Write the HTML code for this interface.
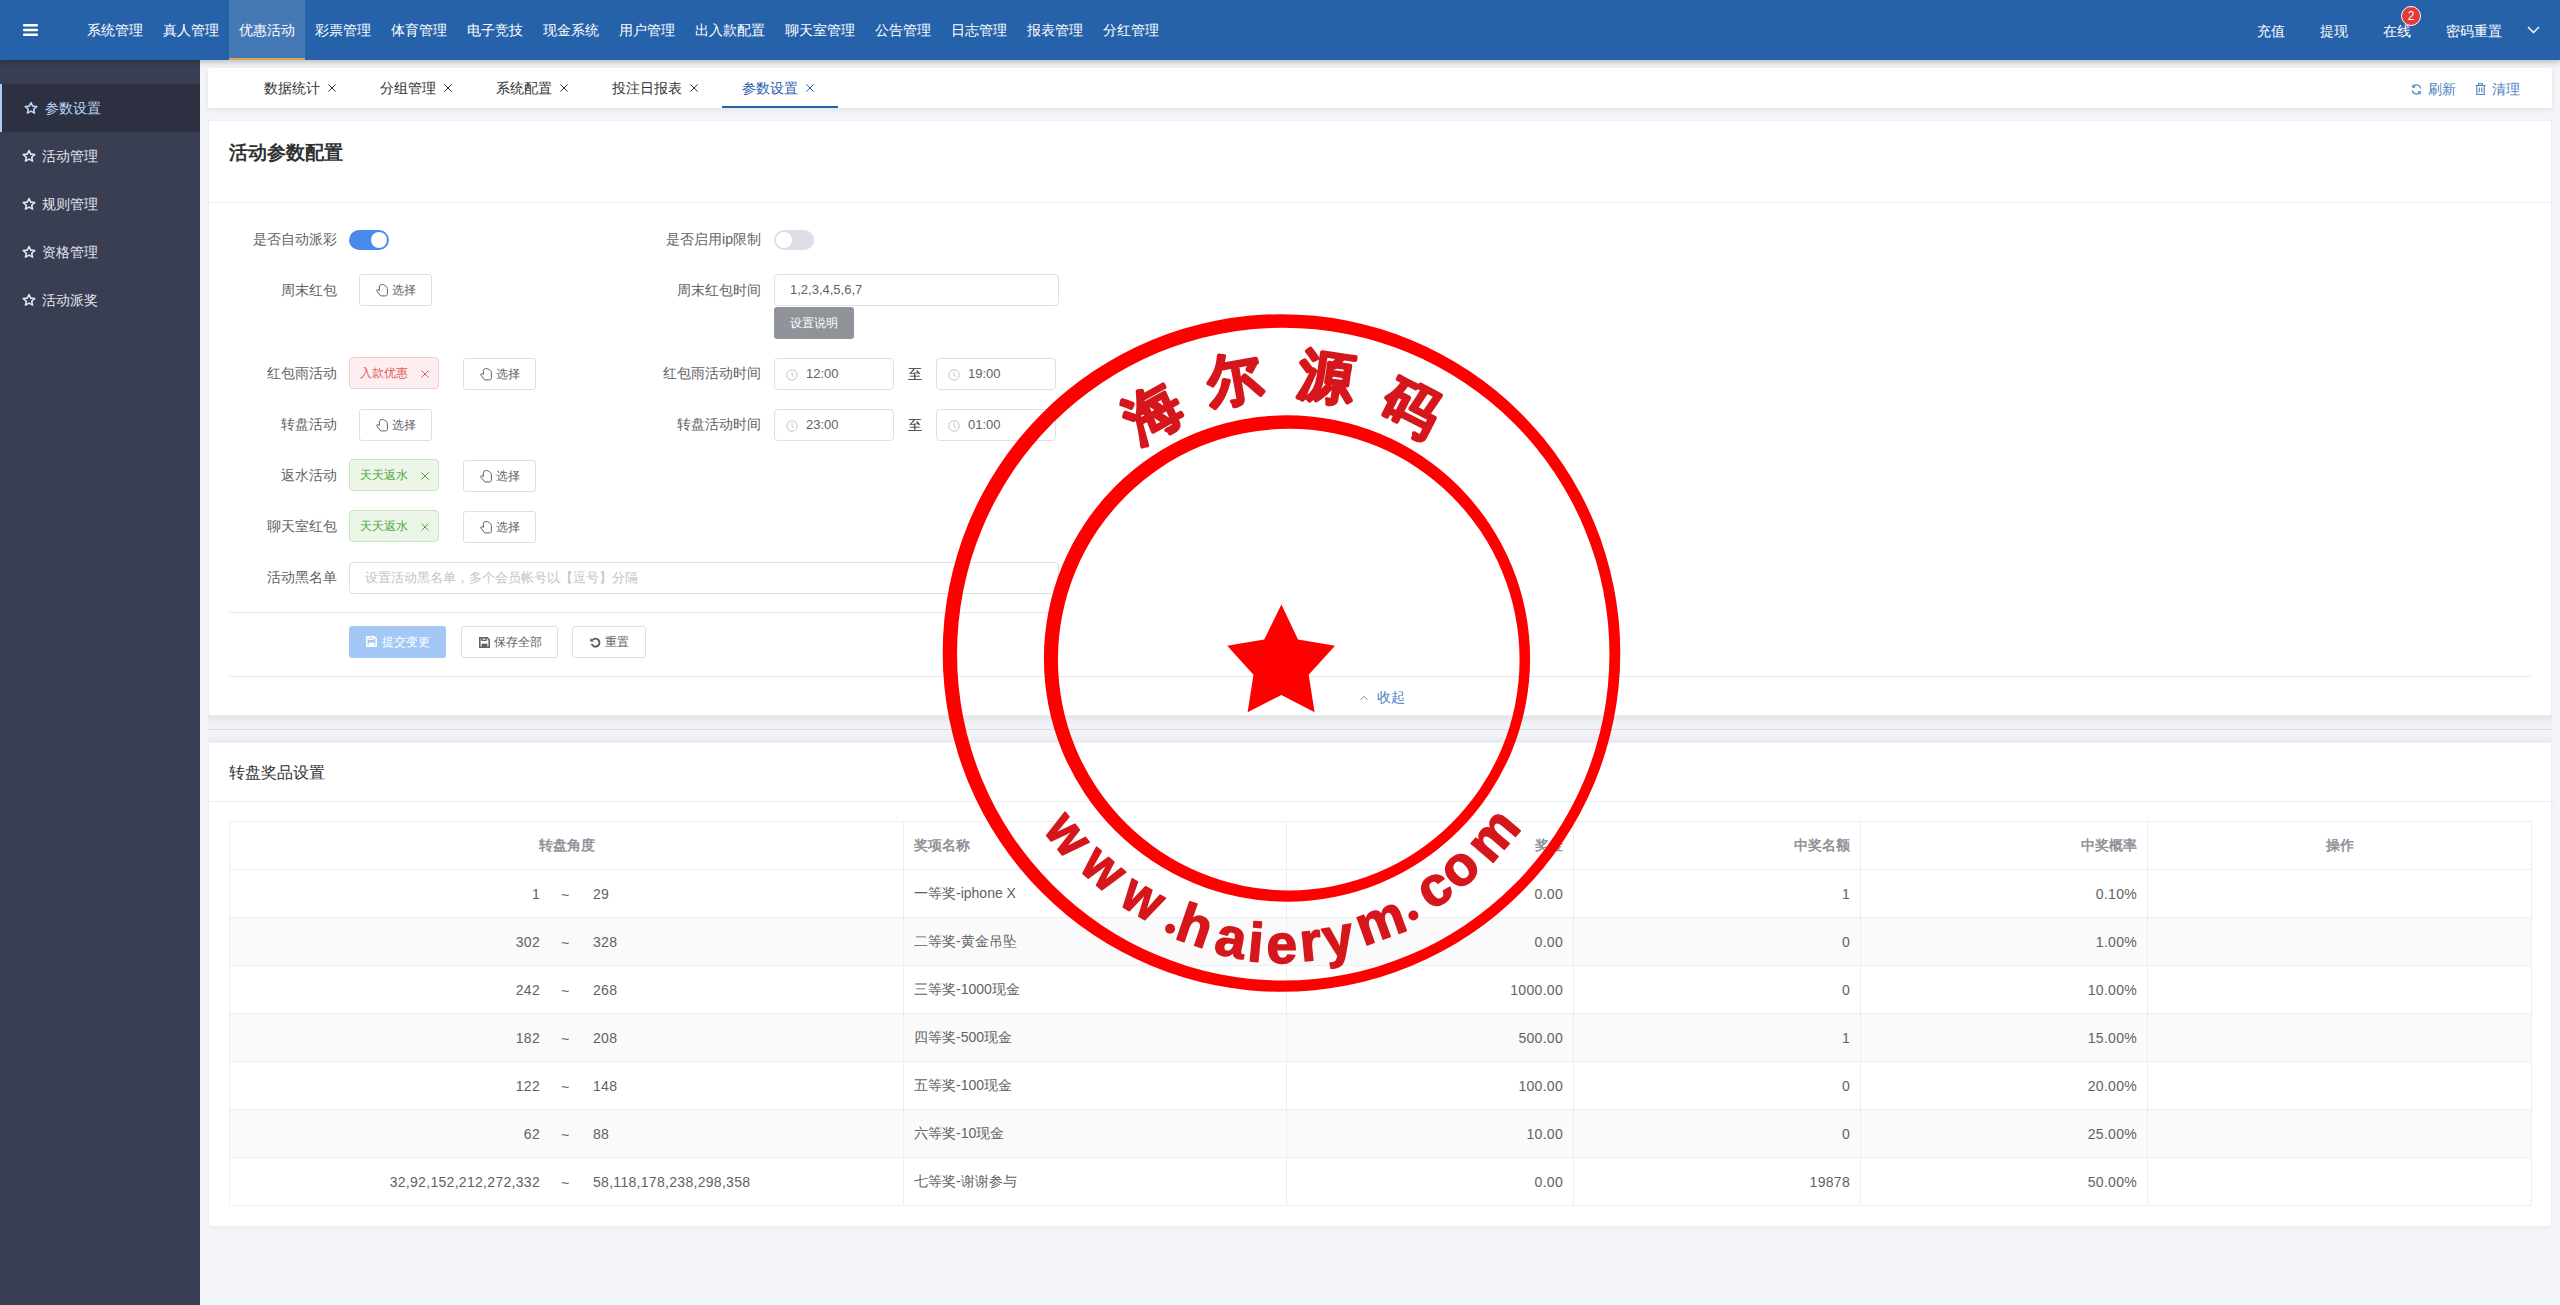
<!DOCTYPE html>
<html><head><meta charset="utf-8">
<style>
*{box-sizing:border-box;margin:0;padding:0}
html,body{width:2560px;height:1305px;overflow:hidden}
body{background:#f3f5f9;font-family:"Liberation Sans",sans-serif;position:relative;color:#606266}
.a{position:absolute}
#hdr{left:0;top:0;width:2560px;height:60px;background:#2662aa;box-shadow:0 2px 6px rgba(0,0,0,.25);z-index:5}
.nav{position:absolute;top:0;height:60px;line-height:60px;color:#fff;font-size:14px;text-align:center;white-space:nowrap}
.nav.act{background:#4579b6;border-bottom:2px solid #dca657;line-height:60px}
#side{left:0;top:60px;width:200px;height:1245px;background:#3a3e52;z-index:4}
.si{position:absolute;left:0;width:200px;height:48px;line-height:48px;color:#e3e6ee;font-size:14px;white-space:nowrap}
.si svg{position:absolute;top:17px}
.si span{position:absolute}
.si.act{background:#2d3041;color:#b9d5f6}
.si.act:before{content:"";position:absolute;left:0;top:0;width:2px;height:48px;background:#a9cdf7}
#tabs{left:208px;top:68px;width:2344px;height:40px;background:#fff;box-shadow:0 2px 6px rgba(0,0,0,.08)}
.tab{position:absolute;top:0;height:40px;line-height:40px;font-size:14px;color:#303133;white-space:nowrap}
.tab.act{color:#2662aa;border-bottom:2px solid #2662aa}
.card{background:#fff;border-radius:2px;border:1px solid #ebeef5;box-shadow:0 1px 3px rgba(0,0,0,.04)}
.lbl{position:absolute;font-size:14px;color:#606266;text-align:right;white-space:nowrap;height:32px;line-height:32px}
.btn{position:absolute;height:32px;border:1px solid #dcdfe6;border-radius:3px;background:#fff;font-size:12px;color:#606266;line-height:30px;white-space:nowrap}
.inp{position:absolute;height:32px;border:1px solid #dcdfe6;border-radius:4px;background:#fff;font-size:13px;color:#606266;line-height:30px;white-space:nowrap}
.tag{position:absolute;height:32px;border:1px solid;border-radius:4px;font-size:12px;line-height:30px;white-space:nowrap}
.tag.red{background:#fdeff0;border-color:#f7c9cb;color:#e2595b}
.tag.grn{background:#ebf6e8;border-color:#c8e6be;color:#4eaa3f}
table{border-collapse:collapse;position:absolute;table-layout:fixed}
td,th{height:48px;border:1px solid #ebeef5;font-size:14px;color:#606266;padding:0 10px;white-space:nowrap}
th{color:#909399;font-weight:bold}
tr.stripe td{background:#fafafa}
td.n,td .n{letter-spacing:.3px}
.st{font-family:"Liberation Sans",sans-serif;font-weight:bold;font-size:56px;fill:#d5171c;stroke:#d5171c;stroke-width:2.6px;stroke-linejoin:round;text-anchor:middle;dominant-baseline:central}
.sb{font-family:"Liberation Sans",sans-serif;font-weight:bold;font-size:55px;fill:#d5171c;stroke:#d5171c;stroke-width:1.5px;stroke-linejoin:round;text-anchor:middle}
</style></head><body>
<div id="hdr" class="a">
  <svg class="a" style="left:23px;top:24px" width="15" height="12" viewBox="0 0 15 12"><rect x="0" y="0" width="15" height="2.4" rx="1" fill="#fff"/><rect x="0" y="4.8" width="15" height="2.4" rx="1" fill="#fff"/><rect x="0" y="9.6" width="15" height="2.4" rx="1" fill="#fff"/></svg>
  <div class="nav" style="left:77px;width:76px">系统管理</div>
  <div class="nav" style="left:153px;width:76px">真人管理</div>
  <div class="nav act" style="left:229px;width:76px">优惠活动</div>
  <div class="nav" style="left:305px;width:76px">彩票管理</div>
  <div class="nav" style="left:381px;width:76px">体育管理</div>
  <div class="nav" style="left:457px;width:76px">电子竞技</div>
  <div class="nav" style="left:533px;width:76px">现金系统</div>
  <div class="nav" style="left:609px;width:76px">用户管理</div>
  <div class="nav" style="left:685px;width:90px">出入款配置</div>
  <div class="nav" style="left:775px;width:90px">聊天室管理</div>
  <div class="nav" style="left:865px;width:76px">公告管理</div>
  <div class="nav" style="left:941px;width:76px">日志管理</div>
  <div class="nav" style="left:1017px;width:76px">报表管理</div>
  <div class="nav" style="left:1093px;width:76px">分红管理</div>
  <div class="nav" style="left:2257px;width:28px;top:1px">充值</div>
  <div class="nav" style="left:2320px;width:28px;top:1px">提现</div>
  <div class="nav" style="left:2383px;width:28px;top:1px">在线</div>
  <div class="a" style="left:2401px;top:6px;width:20px;height:20px;border-radius:10px;background:#e53a3a;border:1px solid #fff;color:#fff;font-size:12px;line-height:18px;text-align:center">2</div>
  <div class="nav" style="left:2446px;width:56px;top:1px">密码重置</div>
  <svg class="a" style="left:2527px;top:26px" width="13" height="8" viewBox="0 0 13 8"><path d="M1 1 L6.5 6.5 L12 1" stroke="#fff" stroke-width="1.4" fill="none"/></svg>
</div>
<div id="side" class="a">
  <div class="si act" style="top:24px"><svg style="left:24px" width="14" height="14" viewBox="0 0 24 24"><path d="M12 2.5l2.9 6.3 6.9.7-5.2 4.6 1.5 6.8L12 17.4l-6.1 3.5 1.5-6.8L2.2 9.5l6.9-.7z" fill="none" stroke="currentColor" stroke-width="2.7" stroke-linejoin="round"/></svg><span style="left:45px">参数设置</span></div>
  <div class="si" style="top:72px"><svg style="left:22px" width="14" height="14" viewBox="0 0 24 24"><path d="M12 2.5l2.9 6.3 6.9.7-5.2 4.6 1.5 6.8L12 17.4l-6.1 3.5 1.5-6.8L2.2 9.5l6.9-.7z" fill="none" stroke="currentColor" stroke-width="2.7" stroke-linejoin="round"/></svg><span style="left:42px">活动管理</span></div>
  <div class="si" style="top:120px"><svg style="left:22px" width="14" height="14" viewBox="0 0 24 24"><path d="M12 2.5l2.9 6.3 6.9.7-5.2 4.6 1.5 6.8L12 17.4l-6.1 3.5 1.5-6.8L2.2 9.5l6.9-.7z" fill="none" stroke="currentColor" stroke-width="2.7" stroke-linejoin="round"/></svg><span style="left:42px">规则管理</span></div>
  <div class="si" style="top:168px"><svg style="left:22px" width="14" height="14" viewBox="0 0 24 24"><path d="M12 2.5l2.9 6.3 6.9.7-5.2 4.6 1.5 6.8L12 17.4l-6.1 3.5 1.5-6.8L2.2 9.5l6.9-.7z" fill="none" stroke="currentColor" stroke-width="2.7" stroke-linejoin="round"/></svg><span style="left:42px">资格管理</span></div>
  <div class="si" style="top:216px"><svg style="left:22px" width="14" height="14" viewBox="0 0 24 24"><path d="M12 2.5l2.9 6.3 6.9.7-5.2 4.6 1.5 6.8L12 17.4l-6.1 3.5 1.5-6.8L2.2 9.5l6.9-.7z" fill="none" stroke="currentColor" stroke-width="2.7" stroke-linejoin="round"/></svg><span style="left:42px">活动派奖</span></div>
</div>
<div id="tabs" class="a">
  <div class="tab" style="left:36px;width:116px;padding-left:20px">数据统计<svg class="a" style="left:84px;top:16px" width="8" height="8" viewBox="0 0 8 8"><path d="M.4 .4l7.2 7.2M7.6 .4L.4 7.6" stroke="#303133" stroke-width="1"/></svg></div>
  <div class="tab" style="left:152px;width:116px;padding-left:20px">分组管理<svg class="a" style="left:84px;top:16px" width="8" height="8" viewBox="0 0 8 8"><path d="M.4 .4l7.2 7.2M7.6 .4L.4 7.6" stroke="#303133" stroke-width="1"/></svg></div>
  <div class="tab" style="left:268px;width:116px;padding-left:20px">系统配置<svg class="a" style="left:84px;top:16px" width="8" height="8" viewBox="0 0 8 8"><path d="M.4 .4l7.2 7.2M7.6 .4L.4 7.6" stroke="#303133" stroke-width="1"/></svg></div>
  <div class="tab" style="left:384px;width:130px;padding-left:20px">投注日报表<svg class="a" style="left:98px;top:16px" width="8" height="8" viewBox="0 0 8 8"><path d="M.4 .4l7.2 7.2M7.6 .4L.4 7.6" stroke="#303133" stroke-width="1"/></svg></div>
  <div class="tab act" style="left:514px;width:116px;padding-left:20px">参数设置<svg class="a" style="left:84px;top:16px" width="8" height="8" viewBox="0 0 8 8"><path d="M.4 .4l7.2 7.2M7.6 .4L.4 7.6" stroke="#2662aa" stroke-width="1"/></svg></div>
  <div class="a" style="left:2203px;top:1px;height:40px;line-height:40px;font-size:14px;color:#4a7fc6;white-space:nowrap">
    <svg class="a" style="left:0;top:15px" width="11" height="11" viewBox="0 0 12 12"><path d="M10.5 5A4.6 4.6 0 0 0 2 3.2M1.5 7A4.6 4.6 0 0 0 10 8.8" fill="none" stroke="#4a7fc6" stroke-width="1.2"/><path d="M2 .8v2.6h2.6M10 11.2V8.6H7.4" fill="none" stroke="#4a7fc6" stroke-width="1.2"/></svg>
    <span class="a" style="left:17px;top:0">刷新</span>
    <svg class="a" style="left:64px;top:14px" width="11" height="12" viewBox="0 0 11 12"><path d="M.5 2.5h10M3.5 2.5V.8h4v1.7M1.8 2.5v9h7.4v-9M4.2 4.5v5M6.8 4.5v5" fill="none" stroke="#4a7fc6" stroke-width="1.1"/></svg>
    <span class="a" style="left:81px;top:0">清理</span>
  </div>
</div>
<!-- card 1 -->
<div class="a card" style="left:208px;top:120px;width:2344px;height:596px">
  <div class="a" style="left:20px;top:20px;font-size:19px;font-weight:bold;color:#303133;line-height:24px">活动参数配置</div>
  <div class="a" style="left:0;top:81px;width:2342px;height:1px;background:#ebeef5"></div>
</div>
<div class="a" style="left:208px;top:716px;width:2344px;height:26px;background:linear-gradient(#e2e4e9 0px,#eceef2 5px,#f2f3f7 10px,#f3f4f8 13px,#f0f1f5 20px,#e9eaef 26px)"></div><div class="a" style="left:208px;top:729px;width:2344px;height:1px;background:#d8dbe0"></div>
<!-- card 2 -->
<div class="a card" style="left:208px;top:742px;width:2344px;height:485px">
  <div class="a" style="left:20px;top:20px;font-size:16px;color:#303133;line-height:20px">转盘奖品设置</div>
  <div class="a" style="left:0;top:58px;width:2344px;height:1px;background:#ebeef5"></div>
</div>
<div id="form">
<div class="lbl" style="left:137px;width:200px;top:223px">是否自动派彩</div>
<div class="a" style="left:349px;top:230px;width:40px;height:20px;border-radius:10px;background:#4a8ae8"><div class="a" style="left:22px;top:2px;width:16px;height:16px;border-radius:8px;background:#fff"></div></div>
<div class="lbl" style="left:561px;width:200px;top:223px">是否启用ip限制</div>
<div class="a" style="left:774px;top:230px;width:40px;height:20px;border-radius:10px;background:#dcdfe6"><div class="a" style="left:2px;top:2px;width:16px;height:16px;border-radius:8px;background:#fff"></div></div>
<div class="lbl" style="left:137px;width:200px;top:274px">周末红包</div>
<div class="btn" style="left:359px;top:274px;width:73px"><svg class="a" style="left:16px;top:9px" width="12" height="13" viewBox="0 0 12 13"><path d="M3.4 6.6V2.2C3.4.6 7.2-.2 8.8 1.4C10.4 2.1 11.4 3.1 11.4 4.7V9.9C11.4 11.3 10.6 11.9 9.6 11.9H4.7L.7 6.8C.3 6.2.7 5.9 1.2 5.9H3.4" fill="none" stroke="#606266" stroke-width="1"/></svg><span class="a" style="left:32px;top:0">选择</span></div>
<div class="lbl" style="left:561px;width:200px;top:274px">周末红包时间</div>
<div class="inp" style="left:774px;top:274px;width:285px"><span class="a" style="left:15px;top:0">1,2,3,4,5,6,7</span></div>
<div class="a" style="left:774px;top:307px;width:80px;height:32px;border-radius:3px;background:#909399;color:#fff;font-size:12px;line-height:32px;text-align:center">设置说明</div>
<div class="lbl" style="left:137px;width:200px;top:357px">红包雨活动</div>
<div class="tag red" style="left:349px;top:357px;width:90px"><span class="a" style="left:10px;top:0">入款优惠</span><svg class="a" style="left:71px;top:12px" width="8" height="8" viewBox="0 0 8 8"><path d="M.5 .5l7 7M7.5 .5l-7 7" stroke="currentColor" stroke-width="1"/></svg></div>
<div class="btn" style="left:463px;top:358px;width:73px"><svg class="a" style="left:16px;top:9px" width="12" height="13" viewBox="0 0 12 13"><path d="M3.4 6.6V2.2C3.4.6 7.2-.2 8.8 1.4C10.4 2.1 11.4 3.1 11.4 4.7V9.9C11.4 11.3 10.6 11.9 9.6 11.9H4.7L.7 6.8C.3 6.2.7 5.9 1.2 5.9H3.4" fill="none" stroke="#606266" stroke-width="1"/></svg><span class="a" style="left:32px;top:0">选择</span></div>
<div class="lbl" style="left:561px;width:200px;top:357px">红包雨活动时间</div>
<div class="inp" style="left:774px;top:358px;width:120px"><svg class="a" style="left:11px;top:10px" width="12" height="12" viewBox="0 0 12 12"><circle cx="6" cy="6" r="5.2" fill="none" stroke="#c0c4cc" stroke-width="1"/><path d="M6 3v3.2l2 1.6" fill="none" stroke="#c0c4cc" stroke-width="1"/></svg><span class="a" style="left:31px;top:0">12:00</span></div>
<div class="a" style="left:908px;top:358px;font-size:14px;line-height:32px;color:#303133">至</div>
<div class="inp" style="left:936px;top:358px;width:120px"><svg class="a" style="left:11px;top:10px" width="12" height="12" viewBox="0 0 12 12"><circle cx="6" cy="6" r="5.2" fill="none" stroke="#c0c4cc" stroke-width="1"/><path d="M6 3v3.2l2 1.6" fill="none" stroke="#c0c4cc" stroke-width="1"/></svg><span class="a" style="left:31px;top:0">19:00</span></div>
<div class="lbl" style="left:137px;width:200px;top:408px">转盘活动</div>
<div class="btn" style="left:359px;top:409px;width:73px"><svg class="a" style="left:16px;top:9px" width="12" height="13" viewBox="0 0 12 13"><path d="M3.4 6.6V2.2C3.4.6 7.2-.2 8.8 1.4C10.4 2.1 11.4 3.1 11.4 4.7V9.9C11.4 11.3 10.6 11.9 9.6 11.9H4.7L.7 6.8C.3 6.2.7 5.9 1.2 5.9H3.4" fill="none" stroke="#606266" stroke-width="1"/></svg><span class="a" style="left:32px;top:0">选择</span></div>
<div class="lbl" style="left:561px;width:200px;top:408px">转盘活动时间</div>
<div class="inp" style="left:774px;top:409px;width:120px"><svg class="a" style="left:11px;top:10px" width="12" height="12" viewBox="0 0 12 12"><circle cx="6" cy="6" r="5.2" fill="none" stroke="#c0c4cc" stroke-width="1"/><path d="M6 3v3.2l2 1.6" fill="none" stroke="#c0c4cc" stroke-width="1"/></svg><span class="a" style="left:31px;top:0">23:00</span></div>
<div class="a" style="left:908px;top:409px;font-size:14px;line-height:32px;color:#303133">至</div>
<div class="inp" style="left:936px;top:409px;width:120px"><svg class="a" style="left:11px;top:10px" width="12" height="12" viewBox="0 0 12 12"><circle cx="6" cy="6" r="5.2" fill="none" stroke="#c0c4cc" stroke-width="1"/><path d="M6 3v3.2l2 1.6" fill="none" stroke="#c0c4cc" stroke-width="1"/></svg><span class="a" style="left:31px;top:0">01:00</span></div>
<div class="lbl" style="left:137px;width:200px;top:459px">返水活动</div>
<div class="tag grn" style="left:349px;top:459px;width:90px"><span class="a" style="left:10px;top:0">天天返水</span><svg class="a" style="left:71px;top:12px" width="8" height="8" viewBox="0 0 8 8"><path d="M.5 .5l7 7M7.5 .5l-7 7" stroke="currentColor" stroke-width="1"/></svg></div>
<div class="btn" style="left:463px;top:460px;width:73px"><svg class="a" style="left:16px;top:9px" width="12" height="13" viewBox="0 0 12 13"><path d="M3.4 6.6V2.2C3.4.6 7.2-.2 8.8 1.4C10.4 2.1 11.4 3.1 11.4 4.7V9.9C11.4 11.3 10.6 11.9 9.6 11.9H4.7L.7 6.8C.3 6.2.7 5.9 1.2 5.9H3.4" fill="none" stroke="#606266" stroke-width="1"/></svg><span class="a" style="left:32px;top:0">选择</span></div>
<div class="lbl" style="left:137px;width:200px;top:510px">聊天室红包</div>
<div class="tag grn" style="left:349px;top:510px;width:90px"><span class="a" style="left:10px;top:0">天天返水</span><svg class="a" style="left:71px;top:12px" width="8" height="8" viewBox="0 0 8 8"><path d="M.5 .5l7 7M7.5 .5l-7 7" stroke="currentColor" stroke-width="1"/></svg></div>
<div class="btn" style="left:463px;top:511px;width:73px"><svg class="a" style="left:16px;top:9px" width="12" height="13" viewBox="0 0 12 13"><path d="M3.4 6.6V2.2C3.4.6 7.2-.2 8.8 1.4C10.4 2.1 11.4 3.1 11.4 4.7V9.9C11.4 11.3 10.6 11.9 9.6 11.9H4.7L.7 6.8C.3 6.2.7 5.9 1.2 5.9H3.4" fill="none" stroke="#606266" stroke-width="1"/></svg><span class="a" style="left:32px;top:0">选择</span></div>
<div class="lbl" style="left:137px;width:200px;top:561px">活动黑名单</div>
<div class="inp" style="left:349px;top:562px;width:710px;color:#c0c4cc"><span class="a" style="left:15px;top:0">设置活动黑名单，多个会员帐号以【逗号】分隔</span></div>
<div class="a" style="left:229px;top:612px;width:830px;height:1px;background:#e4e7ed"></div>
<div class="a" style="left:349px;top:626px;width:97px;height:32px;border-radius:3px;background:#a3c8f5;color:#fff;font-size:12px;line-height:32px"><svg class="a" style="left:17px;top:10px" width="11" height="11" viewBox="0 0 11 11"><path d="M.8 .8h7.4l2 2v7.4H.8z" fill="none" stroke="#fff" stroke-width="1.6"/><path d="M3 .8v2.6h4V.8" fill="none" stroke="#fff" stroke-width="1.4"/><path d="M2.6 10.2V6.6h5.8v3.6" fill="#fff"/></svg><span class="a" style="left:33px;top:0">提交变更</span></div>
<div class="btn" style="left:461px;top:626px;width:97px"><svg class="a" style="left:17px;top:10px" width="11" height="11" viewBox="0 0 11 11"><path d="M.8 .8h7.4l2 2v7.4H.8z" fill="none" stroke="#606266" stroke-width="1.6"/><path d="M3 .8v2.6h4V.8" fill="none" stroke="#606266" stroke-width="1.4"/><path d="M2.6 10.2V6.6h5.8v3.6" fill="#606266"/></svg><span class="a" style="left:32px;top:0">保存全部</span></div>
<div class="btn" style="left:572px;top:626px;width:74px"><svg class="a" style="left:17px;top:10px" width="11" height="11" viewBox="0 0 11 11"><path d="M2.4 3A4 4 0 1 1 1.6 6.8" fill="none" stroke="#555" stroke-width="1.8"/><path d="M.3 1v3.6h3.6z" fill="#555"/></svg><span class="a" style="left:32px;top:0">重置</span></div>
<div class="a" style="left:229px;top:676px;width:2302px;height:1px;background:#e4e7ed"></div>
<div class="a" style="left:1358px;top:688px;height:18px;line-height:18px;font-size:14px;color:#4a7fc6;white-space:nowrap"><svg class="a" style="left:2px;top:7px" width="9" height="6" viewBox="0 0 9 6"><path d="M.6 4.8L4 1.2l3.6 3.6" fill="none" stroke="#4a7fc6" stroke-width="0.9"/></svg><span class="a" style="left:19px;top:0">收起</span></div>
</div>
<table style="left:229px;top:821px;width:2302px">
<colgroup><col style="width:674px"><col style="width:383px"><col style="width:287px"><col style="width:287px"><col style="width:287px"><col style="width:384px"></colgroup>
<tr><th style="text-align:center">转盘角度</th><th style="text-align:left">奖项名称</th><th style="text-align:right">奖金</th><th style="text-align:right">中奖名额</th><th style="text-align:right">中奖概率</th><th style="text-align:center">操作</th></tr>
<tr><td style="position:relative"><span class="a n" style="right:363px;top:16px;line-height:16px">1</span><span class="a" style="left:331px;top:17px;line-height:16px">~</span><span class="a n" style="left:363px;top:16px;line-height:16px">29</span></td><td>一等奖-iphone X</td><td class="n" style="text-align:right">0.00</td><td class="n" style="text-align:right">1</td><td class="n" style="text-align:right">0.10%</td><td></td></tr>
<tr class="stripe"><td style="position:relative"><span class="a n" style="right:363px;top:16px;line-height:16px">302</span><span class="a" style="left:331px;top:17px;line-height:16px">~</span><span class="a n" style="left:363px;top:16px;line-height:16px">328</span></td><td>二等奖-黄金吊坠</td><td class="n" style="text-align:right">0.00</td><td class="n" style="text-align:right">0</td><td class="n" style="text-align:right">1.00%</td><td></td></tr>
<tr><td style="position:relative"><span class="a n" style="right:363px;top:16px;line-height:16px">242</span><span class="a" style="left:331px;top:17px;line-height:16px">~</span><span class="a n" style="left:363px;top:16px;line-height:16px">268</span></td><td>三等奖-1000现金</td><td class="n" style="text-align:right">1000.00</td><td class="n" style="text-align:right">0</td><td class="n" style="text-align:right">10.00%</td><td></td></tr>
<tr class="stripe"><td style="position:relative"><span class="a n" style="right:363px;top:16px;line-height:16px">182</span><span class="a" style="left:331px;top:17px;line-height:16px">~</span><span class="a n" style="left:363px;top:16px;line-height:16px">208</span></td><td>四等奖-500现金</td><td class="n" style="text-align:right">500.00</td><td class="n" style="text-align:right">1</td><td class="n" style="text-align:right">15.00%</td><td></td></tr>
<tr><td style="position:relative"><span class="a n" style="right:363px;top:16px;line-height:16px">122</span><span class="a" style="left:331px;top:17px;line-height:16px">~</span><span class="a n" style="left:363px;top:16px;line-height:16px">148</span></td><td>五等奖-100现金</td><td class="n" style="text-align:right">100.00</td><td class="n" style="text-align:right">0</td><td class="n" style="text-align:right">20.00%</td><td></td></tr>
<tr class="stripe"><td style="position:relative"><span class="a n" style="right:363px;top:16px;line-height:16px">62</span><span class="a" style="left:331px;top:17px;line-height:16px">~</span><span class="a n" style="left:363px;top:16px;line-height:16px">88</span></td><td>六等奖-10现金</td><td class="n" style="text-align:right">10.00</td><td class="n" style="text-align:right">0</td><td class="n" style="text-align:right">25.00%</td><td></td></tr>
<tr><td style="position:relative"><span class="a n" style="right:363px;top:16px;line-height:16px">32,92,152,212,272,332</span><span class="a" style="left:331px;top:17px;line-height:16px">~</span><span class="a n" style="left:363px;top:16px;line-height:16px">58,118,178,238,298,358</span></td><td>七等奖-谢谢参与</td><td class="n" style="text-align:right">0.00</td><td class="n" style="text-align:right">19878</td><td class="n" style="text-align:right">50.00%</td><td></td></tr>
</table>
<svg class="a" style="left:0;top:0;z-index:10" width="2560" height="1305" viewBox="0 0 2560 1305">
  <path fill="#ff0000" fill-rule="evenodd" d="M942.70 653.00a338.80 338.80 0 1 0 677.60 0a338.80 338.80 0 1 0 -677.60 0ZM957.05 654.05a326.20 326.20 0 1 0 652.40 0a326.20 326.20 0 1 0 -652.40 0Z"/>
  <path fill="#ff0000" fill-rule="evenodd" d="M1043.90 658.60a243.10 243.10 0 1 0 486.20 0a243.10 243.10 0 1 0 -486.20 0ZM1057.95 659.60a230.80 230.80 0 1 0 461.60 0a230.80 230.80 0 1 0 -461.60 0Z"/>
  <path d="M1281.4 604.5 L1298 639.6 L1335 645.8 L1308.7 674.8 L1314.6 712.3 L1281.4 695 L1247.6 712.3 L1253.5 674.8 L1227.2 645.8 L1264.2 639.6 Z" fill="#ff0000"/>
<text x="1152.6" y="412.8" class="st" transform="rotate(-29.1 1152.6 412.8)">海</text>
<text x="1234.2" y="378.4" class="st" transform="rotate(-10.1 1234.2 378.4)">尔</text>
<text x="1327.0" y="376.6" class="st" transform="rotate(8.4 1327.0 376.6)">源</text>
<text x="1411.8" y="407.8" class="st" transform="rotate(27.2 1411.8 407.8)">码</text>
<text x="0" y="0" class="sb" transform="translate(1054.5 845.2) rotate(51.3) scale(0.9 1)">w</text>
<text x="0" y="0" class="sb" transform="translate(1092.4 881.7) rotate(40.5) scale(0.9 1)">w</text>
<text x="0" y="0" class="sb" transform="translate(1134.0 913.4) rotate(30.4) scale(0.9 1)">w</text>
<circle cx="1170.1" cy="928.7" r="5" fill="#d5171c"/>
<text x="1189.2" y="943.4" class="sb" transform="rotate(19.0 1189.2 943.4)">h</text>
<text x="1227.7" y="956.2" class="sb" transform="rotate(11.2 1227.7 956.2)">a</text>
<text x="1254.1" y="961.5" class="sb" transform="rotate(5.3 1254.1 961.5)">i</text>
<text x="1281.7" y="962.5" class="sb" transform="rotate(0.0 1281.7 962.5)">e</text>
<text x="1312.1" y="960.4" class="sb" transform="rotate(-5.7 1312.1 960.4)">r</text>
<text x="1341.3" y="955.3" class="sb" transform="rotate(-10.6 1341.3 955.3)">y</text>
<text x="1386.4" y="938.0" class="sb" transform="rotate(-19.8 1386.4 938.0)">m</text>
<circle cx="1413.4" cy="915.5" r="5" fill="#d5171c"/>
<text x="1443.6" y="902.8" class="sb" transform="rotate(-32.7 1443.6 902.8)">c</text>
<text x="1470.6" y="880.9" class="sb" transform="rotate(-41.1 1470.6 880.9)">o</text>
<text x="1506.7" y="846.7" class="sb" transform="rotate(-49.4 1506.7 846.7)">m</text>

</svg>
</body></html>
